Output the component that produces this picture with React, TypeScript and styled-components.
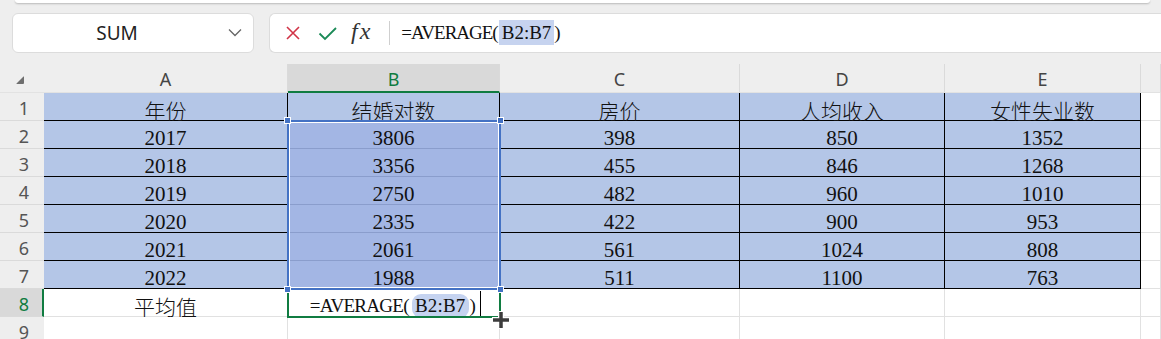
import React from 'react';
import styled, { createGlobalStyle } from 'styled-components';

const GlobalStyle = createGlobalStyle`
  html, body {
    margin: 0;
    padding: 0;
    background: #eeeeee;
    overflow: hidden;
  }
  * {
    box-sizing: border-box;
  }
`;

const UI_FONT = `"Noto Sans", "Open Sans", "Liberation Sans", sans-serif`;
const CELL_FONT = `"Liberation Serif", "Noto Sans CJK SC", serif`;
const GREEN = '#107c41';
const BLUE = '#4472c4';

const Page = styled.div`
  width: 1161px;
  height: 339px;
  background: #eeeeee;
  overflow: hidden;
`;

const RibbonEdge = styled.div`
  height: 3px;
  margin: 0 11px 0 15px;
  background: #ffffff;
  border-radius: 0 0 8px 8px;
  box-shadow: 0 1px 2px rgba(0, 0, 0, 0.22);
`;

const FormulaRow = styled.div`
  display: flex;
  gap: 15px;
  height: 40px;
  margin-top: 10px;
  padding-left: 12px;
`;

const NameBox = styled.div`
  position: relative;
  width: 242px;
  display: flex;
  align-items: center;
  background: #ffffff;
  border: 1px solid #dcdcdc;
  border-radius: 6px;
  padding-right: 32px;
`;

const NameText = styled.span`
  flex: 1;
  text-align: center;
  font-family: ${UI_FONT};
  font-size: 19px;
  color: #222;
`;

const Chevron = styled.svg`
  position: absolute;
  right: 11px;
  top: 14px;
`;

const FormulaBar = styled.div`
  flex: 1;
  display: flex;
  align-items: center;
  background: #ffffff;
  border: 1px solid #dcdcdc;
  border-right: none;
  border-radius: 6px 0 0 6px;
  padding-left: 15px;
`;

const IconSlot = styled.span`
  width: 33px;
  display: flex;
  align-items: center;
  justify-content: flex-start;
`;

const FxMark = styled.span`
  font-family: "Liberation Serif", serif;
  font-style: italic;
  font-size: 24px;
  color: #333;
  letter-spacing: 2px;
  margin-top: -3px;
`;

const Divider = styled.span`
  width: 1px;
  height: 24px;
  background: #cfcfcf;
  margin: 0 11px 0 17px;
`;

const FormulaText = styled.span`
  font-family: ${CELL_FONT};
  font-size: 19px;
  color: #111;
  white-space: pre;
  letter-spacing: -1px;
`;

const RefMark = styled.span`
  background: #c6d3ef;
  padding: 2px 3px;
  margin-left: 1px;
  letter-spacing: 0;
`;

const Sheet = styled.div`
  position: relative;
  margin-top: 11px;
  display: grid;
  grid-template-columns: 44px 244px 212px 240px 205px 196px 1fr;
  grid-template-rows: 29px repeat(9, 28px);
`;

const Corner = styled.div`
  position: relative;
  background: #eeeeee;
  border-bottom: 1px solid #e2e2e2;
  &::after {
    content: '';
    position: absolute;
    left: 16px;
    top: 12px;
    width: 0;
    height: 0;
    border-left: 8px solid transparent;
    border-bottom: 8px solid #6e6e6e;
    border-radius: 1px;
  }
`;

const ColHeader = styled.div<{ $active?: boolean }>`
  display: flex;
  align-items: center;
  justify-content: center;
  font-family: ${UI_FONT};
  font-size: 18px;
  color: ${(p) => (p.$active ? GREEN : '#444')};
  background: ${(p) => (p.$active ? '#d9d9d9' : '#eeeeee')};
  border-right: 1px solid #dadada;
  border-bottom: ${(p) => (p.$active ? `2px solid ${GREEN}` : '1px solid #e2e2e2')};
  padding-top: 2px;
`;

const RowHeader = styled.div<{ $active?: boolean }>`
  display: flex;
  align-items: center;
  justify-content: center;
  font-family: ${UI_FONT};
  font-size: 18px;
  color: ${(p) => (p.$active ? GREEN : '#555')};
  background: ${(p) => (p.$active ? '#d9d9d9' : '#eeeeee')};
  border-bottom: 1px solid #dadada;
  border-right: ${(p) => (p.$active ? `2px solid ${GREEN}` : 'none')};
  padding-left: ${(p) => (p.$active ? '6px' : '4px')};
  padding-top: 2px;
`;

type Tone = 'table' | 'selected' | 'plain' | 'edge';

const toneBg: Record<Tone, string> = {
  table: '#b4c6e7',
  selected: '#a3b6e4',
  plain: '#ffffff',
  edge: '#ffffff',
};

const Cell = styled.div<{ $tone: Tone }>`
  display: flex;
  align-items: center;
  justify-content: center;
  font-family: ${CELL_FONT};
  font-size: 21px;
  font-weight: 300;
  color: #111;
  padding-top: 7px;
  white-space: nowrap;
  background: ${(p) => toneBg[p.$tone]};
  border-right: 1px solid
    ${(p) => (p.$tone === 'plain' || p.$tone === 'edge' ? '#e1e1e1' : '#000')};
  border-bottom: 1px solid
    ${(p) => (p.$tone === 'plain' || p.$tone === 'edge' ? '#e1e1e1' : p.$tone === 'selected' ? '#8a9dcc' : '#000')};
`;

const SelectionBox = styled.div`
  position: absolute;
  left: 287px;
  top: 56px;
  width: 214px;
  height: 170px;
  border: 2px solid ${BLUE};
  box-shadow: inset 0 0 0 1px #ffffff;
  pointer-events: none;
  z-index: 3;
`;

const Handle = styled.span<{ $x: 'l' | 'r'; $y: 't' | 'b' }>`
  position: absolute;
  width: 7px;
  height: 7px;
  background: ${BLUE};
  border: 1px solid #ffffff;
  ${(p) => (p.$x === 'l' ? 'left: -5px;' : 'right: -5px;')}
  ${(p) => (p.$y === 't' ? 'top: -5px;' : 'bottom: -5px;')}
`;

const ActiveCell = styled.div`
  position: absolute;
  left: 287px;
  top: 224px;
  width: 214px;
  height: 30px;
  border: 2px solid ${GREEN};
  border-top: none;
  pointer-events: none;
  z-index: 2;
`;

const EditLine = styled.span`
  display: flex;
  align-items: center;
  font-size: 19px;
  letter-spacing: -0.7px;
  margin-left: 4px;
`;

const RefPill = styled.span`
  background: #c5d3f0;
  border-radius: 9px;
  padding: 1px 3px;
  margin: 0 1px 0 3px;
  letter-spacing: 0.2px;
`;

const Caret = styled.span`
  width: 1px;
  height: 25px;
  background: #000;
  margin-left: 5px;
  margin-top: -5px;
`;

const FillCursor = styled.svg`
  position: absolute;
  left: 490px;
  top: 245px;
  z-index: 4;
`;

const rows: string[][] = [
  ['年份', '结婚对数', '房价', '人均收入', '女性失业数'],
  ['2017', '3806', '398', '850', '1352'],
  ['2018', '3356', '455', '846', '1268'],
  ['2019', '2750', '482', '960', '1010'],
  ['2020', '2335', '422', '900', '953'],
  ['2021', '2061', '561', '1024', '808'],
  ['2022', '1988', '511', '1100', '763'],
];

const letters = ['A', 'B', 'C', 'D', 'E', ''];

export default function App() {
  return (
    <Page>
      <GlobalStyle />
      <RibbonEdge />
      <FormulaRow>
        <NameBox>
          <NameText>SUM</NameText>
          <Chevron width="14" height="9" viewBox="0 0 14 9">
            <path d="M1 1.5 L7 7.5 L13 1.5" fill="none" stroke="#666" strokeWidth="1.3" />
          </Chevron>
        </NameBox>
        <FormulaBar>
          <IconSlot>
            <svg width="16" height="16" viewBox="0 0 16 16">
              <path d="M2 2 L14 14 M14 2 L2 14" stroke="#d13447" strokeWidth="1.6" />
            </svg>
          </IconSlot>
          <IconSlot>
            <svg width="19" height="15" viewBox="0 0 19 15">
              <path d="M1.5 7.5 L7 13 L18 2" fill="none" stroke="#1b8a57" strokeWidth="1.8" />
            </svg>
          </IconSlot>
          <FxMark>fx</FxMark>
          <Divider />
          <FormulaText>
            =AVERAGE(<RefMark>B2:B7</RefMark>)
          </FormulaText>
        </FormulaBar>
      </FormulaRow>

      <Sheet>
        <Corner />
        {letters.map((l, i) => (
          <ColHeader key={i} $active={l === 'B'}>
            {l}
          </ColHeader>
        ))}

        {rows.map((r, ri) => (
          <React.Fragment key={ri}>
            <RowHeader>{ri + 1}</RowHeader>
            {r.map((v, ci) => (
              <Cell key={ci} $tone={ci === 1 && ri > 0 ? 'selected' : 'table'}>
                {v}
              </Cell>
            ))}
            <Cell $tone="edge" />
          </React.Fragment>
        ))}

        <RowHeader $active>8</RowHeader>
        <Cell $tone="plain">平均值</Cell>
        <Cell $tone="plain">
          <EditLine>
            =AVERAGE(<RefPill>B2:B7</RefPill>)
            <Caret />
          </EditLine>
        </Cell>
        <Cell $tone="plain" />
        <Cell $tone="plain" />
        <Cell $tone="plain" />
        <Cell $tone="edge" />

        <RowHeader>9</RowHeader>
        {[0, 1, 2, 3, 4, 5].map((i) => (
          <Cell key={i} $tone="plain" />
        ))}

        <SelectionBox>
          <Handle $x="l" $y="t" />
          <Handle $x="r" $y="t" />
          <Handle $x="l" $y="b" />
          <Handle $x="r" $y="b" />
        </SelectionBox>
        <ActiveCell />
        <FillCursor width="22" height="22" viewBox="0 0 22 22">
          <path d="M11 2 V20 M2 11 H20" stroke="#ffffff" strokeWidth="6" />
          <path d="M11 3 V19 M3 11 H19" stroke="#3c3c3c" strokeWidth="3.5" />
        </FillCursor>
      </Sheet>
    </Page>
  );
}
